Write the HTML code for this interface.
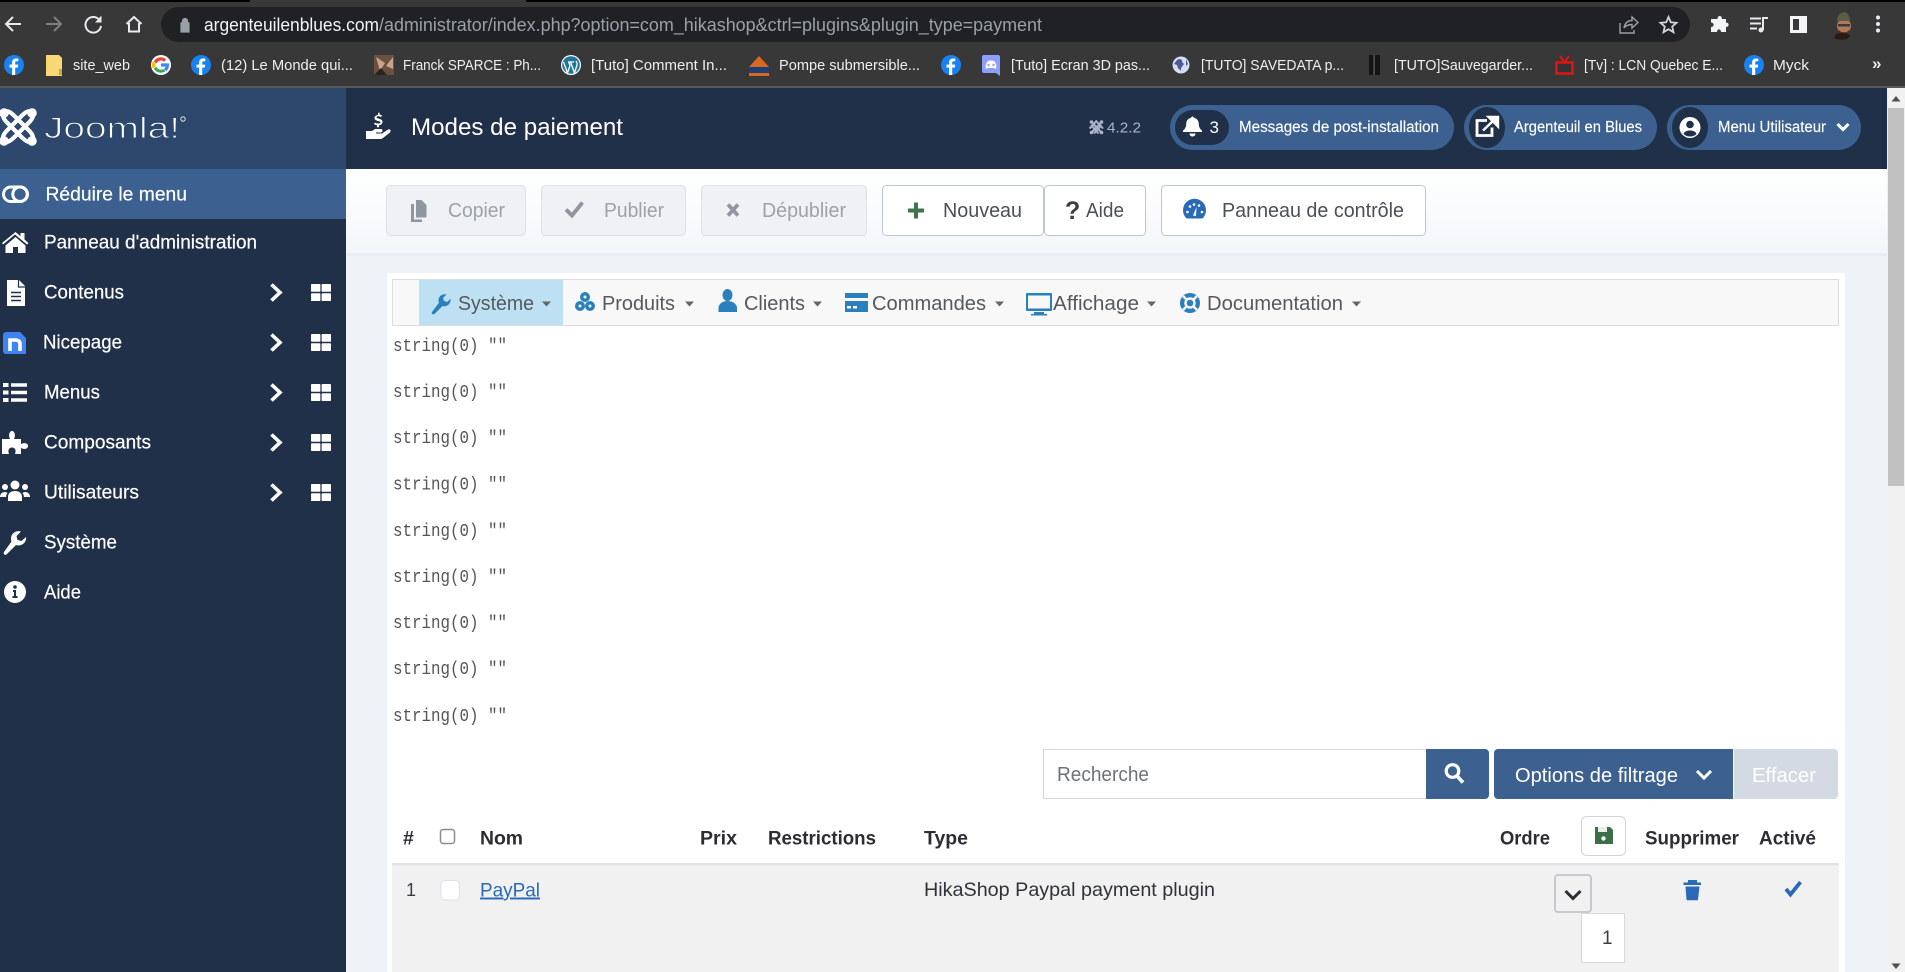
<!DOCTYPE html>
<html lang="fr">
<head>
<meta charset="utf-8">
<title>Modes de paiement</title>
<style>
html,body{margin:0;padding:0;width:1905px;height:972px;overflow:hidden;background:#eef3f7}
svg{display:block;position:absolute;left:0;top:0}
text{font-family:"Liberation Sans",sans-serif;white-space:pre}
.bm{font-size:15px;fill:#eceff1}
.sb{font-size:19.500px;fill:#fff;stroke:#fff;stroke-width:.2}
.nv{font-size:20.500px;fill:#55595e}
.th{font-size:19.500px;font-weight:bold;fill:#2b2d33}
.mono{font-family:"Liberation Mono",monospace;font-size:18.500px;fill:#555}
.dis{font-size:20.500px;fill:#9da2a9}
.en{font-size:20.500px;fill:#4a5058}
.pill{font-size:15.500px;fill:#fff;stroke:#fff;stroke-width:.15}
</style>
</head>
<body>
<svg width="1905" height="972" viewBox="0 0 1905 972" xmlns="http://www.w3.org/2000/svg">
<defs>
<linearGradient id="tb" x1="0" y1="0" x2="0" y2="1"><stop offset="0" stop-color="#ffffff"/><stop offset="1" stop-color="#f3f6fa"/></linearGradient>
<g id="fb"><circle cx="10" cy="10" r="10" fill="#1a82f0"/><path d="M11.2 20v-7.400h2.600l.4-3h-3V7.800c0-.9.3-1.500 1.500-1.500h1.600V3.600c-.4 0-1.200-.1-2.300-.1-2.300 0-3.900 1.400-3.900 4v2.100H5.500v3h2.600V20z" fill="#fff"/></g>
<g id="chev"><path d="M1.500 1.500 10 9.500 1.500 17.500" fill="none" stroke="#fff" stroke-width="3.600"/></g>
<g id="grid"><rect x="0" y="0" width="9.400" height="7.800" rx=".8" fill="#fff"/><rect x="10.600" y="0" width="9.400" height="7.800" rx=".8" fill="#fff"/><rect x="0" y="9.200" width="9.400" height="7.800" rx=".8" fill="#fff"/><rect x="10.600" y="9.200" width="9.400" height="7.800" rx=".8" fill="#fff"/></g>
<path id="caret" d="M0 0h9l-4.500 5z" fill="#666"/>
</defs>

<!-- Browser chrome -->
<rect x="0" y="0" width="1905" height="88" fill="#383838"/>
<rect x="0" y="0" width="250" height="2" fill="#000"/>
<rect x="526" y="0" width="1379" height="2" fill="#000"/>
<rect x="0" y="86" width="1905" height="2" fill="#585858"/>
<path d="M21 24H7M13 17l-7 7 7 7" fill="none" stroke="#e8eaed" stroke-width="2"/>
<path d="M46 24h14M54 17l7 7-7 7" fill="none" stroke="#7d7f82" stroke-width="2"/>
<path d="M99 19.500a7.800 7.800 0 1 0 2 6.500" fill="none" stroke="#e8eaed" stroke-width="2"/><path d="M101.500 15.500v7H95z" fill="#e8eaed"/>
<path d="M126.500 24 134 17l7.500 7M129 23v8.500h10V23" fill="none" stroke="#e8eaed" stroke-width="2"/>
<rect x="161" y="7" width="1529" height="35" rx="17.500" fill="#202124"/>
<path d="M181 23h8v9h-8zM182.500 23v-2a2.500 2.500 0 0 1 5 0v2" fill="#9aa0a6" stroke="#9aa0a6" stroke-width="1.200"/>
<text x="204" y="31" font-size="18" textLength="175" lengthAdjust="spacingAndGlyphs" fill="#f1f3f4">argenteuilenblues.com</text>
<text x="379" y="31" font-size="18" textLength="663" lengthAdjust="spacingAndGlyphs" fill="#9aa0a6">/administrator/index.php?option=com_hikashop&amp;ctrl=plugins&amp;plugin_type=payment</text>
<path d="M1620 23v10h14v-3M1624 28c1-5 4-7.500 8-7.500V17l6 5.500-6 5.500v-3.500c-3 0-6 .7-8 3.500z" fill="none" stroke="#9aa0a6" stroke-width="1.400"/>
<path d="m1668.500 17 2.300 5.300 5.700.5-4.300 3.800 1.300 5.600-5-3-5 3 1.300-5.600-4.300-3.800 5.700-.5z" fill="none" stroke="#d0d3d6" stroke-width="1.800"/>
<path d="M1714 19h3.500c0-4 4.500-4 4.500 0h4v3.500c3.500 0 3.500 4.500 0 4.500v5h-5c0-3.500-4-3.500-4 0H1711v-5c3.500 0 3.500-4.500 0-4.500v-3.500z" fill="#f1f3f4"/>
<path d="M1750 18.500h11M1750 23.500h11M1750 28.500h7" stroke="#e8eaed" stroke-width="2" fill="none"/><path d="M1763 30V18h5" stroke="#e8eaed" stroke-width="2" fill="none"/><circle cx="1761" cy="30" r="2.500" fill="#e8eaed"/>
<rect x="1791.500" y="17.500" width="14" height="14" fill="none" stroke="#f1f3f4" stroke-width="3"/><rect x="1799" y="17" width="7" height="15" fill="#f1f3f4"/>
<path d="M1834 38c1-4 4-5 8-5s7 1 8 3l-3 3c-4 1-10 1-13-1z" fill="#2a1a14"/><circle cx="1844" cy="26" r="7" fill="#b07a5a"/><path d="M1837 21c0-5 3-8 7-9 3 0 6 4 6 9z" fill="#5d5d47"/><rect x="1838" y="24" width="12" height="2.500" fill="#3a3a3a"/><path d="M1839 30c2 3 8 3 10 0v3h-10z" fill="#5a3322"/>
<circle cx="1878" cy="17.500" r="2" fill="#e8eaed"/><circle cx="1878" cy="24" r="2" fill="#e8eaed"/><circle cx="1878" cy="30.500" r="2" fill="#e8eaed"/>

<!-- Bookmarks -->
<use href="#fb" x="4" y="55"/>
<path d="M46 55h13l3 3v18H46z" fill="#f8d775"/><rect x="59" y="69" width="3" height="6" fill="#caa64a"/>
<text class="bm" x="73" y="70" textLength="57" lengthAdjust="spacingAndGlyphs">site_web</text>
<circle cx="161" cy="65" r="10" fill="#fff"/><path d="M161 60.500a4.500 4.500 0 0 1 3 1.200l2.300-2.300a8 8 0 0 0-12.500 2.100l2.700 2.100a4.800 4.800 0 0 1 4.500-3.100z" fill="#ea4335"/><path d="M155.500 63.500a5.500 5.500 0 0 0 0 3l-2.700 2.100a8 8 0 0 1 0-7.200z" fill="#fbbc05"/><path d="M153.800 68.600a8 8 0 0 0 11.800 2.500l-2.500-2a4.800 4.800 0 0 1-6.700-2.400z" fill="#34a853"/><path d="M169 65c0-.6 0-1.100-.2-1.600H161v3.200h4.500a3.900 3.900 0 0 1-1.700 2.500l2.500 2A8 8 0 0 0 169 65z" fill="#4285f4"/>
<use href="#fb" x="191" y="55"/>
<text class="bm" x="221" y="70" textLength="132" lengthAdjust="spacingAndGlyphs">(12) Le Monde qui...</text>
<rect x="374" y="55" width="20" height="20" fill="#6b5040"/><path d="M376 57l9 6-5 8zM386 66l7-9v12z" fill="#c9a58e"/><path d="M374 75l7-7 6 7z" fill="#2a2320"/>
<text class="bm" x="403" y="70" textLength="138" lengthAdjust="spacingAndGlyphs">Franck SPARCE : Ph...</text>
<circle cx="571" cy="65" r="10" fill="#fff"/><circle cx="571" cy="65" r="8.800" fill="#21759b"/><path d="M563.500 62l4 11 2.500-7.500-1.300-3.500M568 62h6M570.500 62l4 11 2.500-8c.5-2-.5-3-1-4" fill="none" stroke="#fff" stroke-width="1.300"/>
<text class="bm" x="591" y="70" textLength="136" lengthAdjust="spacingAndGlyphs">[Tuto] Comment In...</text>
<path d="M749 67l10-11 10 11z" fill="#d9691f"/><rect x="749" y="67" width="20" height="6" fill="#1f3f78"/><rect x="749" y="73" width="20" height="3" fill="#d9691f"/>
<text class="bm" x="779" y="70" textLength="141" lengthAdjust="spacingAndGlyphs">Pompe submersible...</text>
<use href="#fb" x="941" y="55"/>
<path d="M984 55h14a2 2 0 0 1 2 2v19l-4-3h-12a2 2 0 0 1-2-2V57a2 2 0 0 1 2-2z" fill="#8c9eff"/><path d="M986 69c-1-3 0-6 2-8 2-.6 4-.6 6 0 2 2 3 5 2 8l-2-1h-6z" fill="#fff"/><circle cx="988.500" cy="65" r="1.200" fill="#8c9eff"/><circle cx="993.500" cy="65" r="1.200" fill="#8c9eff"/>
<text class="bm" x="1011" y="70" textLength="139" lengthAdjust="spacingAndGlyphs">[Tuto] Ecran 3D pas...</text>
<circle cx="1181" cy="65" r="8.500" fill="#d8dcf0"/><path d="M1177 60c3-2 6 0 5 2l2 2-3 4v3l-3-3-1-3-3-1z" fill="#4c5a94"/><path d="M1186 59l2 5-2 2z" fill="#4c5a94"/>
<text class="bm" x="1201" y="70" textLength="143" lengthAdjust="spacingAndGlyphs">[TUTO] SAVEDATA p...</text>
<rect x="1369" y="55" width="11" height="20" fill="#151515"/><rect x="1373.500" y="55" width="1.200" height="20" fill="#666"/>
<text class="bm" x="1394" y="70" textLength="139" lengthAdjust="spacingAndGlyphs">[TUTO]Sauvegarder...</text>
<path d="M1560 56l4.500 6 4.500-6" fill="none" stroke="#e01515" stroke-width="2"/><rect x="1556.500" y="62.500" width="16" height="11" fill="#333" stroke="#e01515" stroke-width="2.500"/>
<text class="bm" x="1584" y="70" textLength="139" lengthAdjust="spacingAndGlyphs">[Tv] : LCN Quebec E...</text>
<use href="#fb" x="1744" y="55"/>
<text class="bm" x="1773" y="70" textLength="36" lengthAdjust="spacingAndGlyphs">Myck</text>
<text x="1872" y="69" font-size="17" font-weight="bold" fill="#e8eaed">»</text>

<!-- Page background -->
<rect x="0" y="88" width="1905" height="884" fill="#eef3f7"/>

<!-- Sidebar -->
<rect x="0" y="88" width="346" height="884" fill="#1f3048"/>
<rect x="0" y="88" width="346" height="81" fill="#2d486c"/>
<rect x="0" y="169" width="346" height="50" fill="#3c6190"/>
<!-- Logo -->
<g fill="none" stroke="#fff" stroke-width="4.200">
<path d="M13.500 115 29.500 131M6.500 122 22.500 138M22.500 115 6.500 131M29.500 122 13.500 138"/>
<path d="M13.500 115Q7 109 4 112.500Q1 116 6.500 122M22.500 115Q29 109 32 112.500Q35 116 29.500 122M6.500 131Q1 137 4 141Q7 144 13.500 138M29.500 131Q35 137 32 141Q29 144 22.500 138"/>
</g>
<g fill="#fff"><circle cx="4" cy="113" r="4.800"/><circle cx="32" cy="113" r="4.800"/><circle cx="4" cy="141" r="4.800"/><circle cx="32" cy="141" r="4.800"/></g>
<text x="44" y="138" font-size="30" textLength="136" lengthAdjust="spacingAndGlyphs" fill="#fff" stroke="#2d486c" stroke-width="1">Joomla!</text>
<circle cx="183" cy="119" r="2.200" fill="none" stroke="#fff" stroke-width=".8"/>
<!-- Sidebar icons -->
<g fill="none" stroke="#fff" stroke-width="3"><rect x="3.500" y="187" width="24" height="14.500" rx="7.250"/><circle cx="20" cy="194.200" r="7.200"/></g>
<path d="M2 243 15.500 232l5 4.200V233h4v6.500l4 3.500-1.500 1.500-12-10-12 10zM5.500 245.500l10-8.500 10 8.500v7.500h-7.500v-6h-5v6H5.500z" fill="#fff"/>
<path d="M7 280h12l6 6v20H7z" fill="#fff"/><path d="M18.500 279.500v7.500h7" fill="none" stroke="#1f3048" stroke-width="1.200"/><path d="M11 292.500h10M11 296.500h10M11 300.500h10" stroke="#1f3048" stroke-width="1.400"/>
<path d="M6 332h14l6 6v16H6a3 3 0 0 1-3-3V335a3 3 0 0 1 3-3z" fill="#3f84ee"/><path d="M10 351v-11h5c3.500 0 5 1.500 5 4v7" fill="none" stroke="#fff" stroke-width="3.600"/>
<path d="M11 385h16M11 392.500h16M11 400h16" stroke="#fff" stroke-width="3.400"/><rect x="3" y="383" width="5.500" height="4" fill="#fff"/><rect x="3" y="390.500" width="5.500" height="4" fill="#fff"/><rect x="3" y="398" width="5.500" height="4" fill="#fff"/>
<path d="M2 439H10C8 435 9.500 431 12 431C14.500 431 16 435 14 439H21V444C25 442 28 443.500 28 446C28 448.500 25 450 21 448V454H15C16.500 450 15 447.500 12 447.500C9 447.500 7.500 450 9 454H2Z" fill="#fff"/>
<g fill="#fff"><circle cx="15" cy="485" r="4.500"/><circle cx="5" cy="487" r="3"/><circle cx="25" cy="487" r="3"/><path d="M8 501v-4c0-4 3-6 7-6s7 2 7 6v4z"/><path d="M0 497c0-3 2-5 5-5 1 0 2 .5 2.500 1-1 1-1.500 3-1.500 4zM30 497c0-3-2-5-5-5-1 0-2 .5-2.500 1 1 1 1.500 3 1.500 4z"/></g>
<path d="M4 552c-1 1.500 .5 3.500 2.500 2.500L16 545c4 1.500 9-1 10-5.500.2-1 .2-2 0-2.500l-4.500 4-4-1-1-4 4.500-4.500c-5-1.500-10 2-10 7 0 1 0 2 .5 3z" fill="#fff"/>
<circle cx="15" cy="592" r="11" fill="#fff"/><path d="M13 590h3v6h1.500v2h-5v-2H14v-4h-1z" fill="#1f3048"/><circle cx="15" cy="587" r="1.800" fill="#1f3048"/>
<!-- Sidebar labels -->
<text class="sb" x="45.500" y="200.500" textLength="141.500" lengthAdjust="spacingAndGlyphs">Réduire le menu</text>
<text class="sb" x="44" y="248.500" textLength="213" lengthAdjust="spacingAndGlyphs">Panneau d'administration</text>
<text class="sb" x="44" y="298.500" textLength="80" lengthAdjust="spacingAndGlyphs">Contenus</text>
<text class="sb" x="43" y="348.500" textLength="79" lengthAdjust="spacingAndGlyphs">Nicepage</text>
<text class="sb" x="44" y="398.500" textLength="56" lengthAdjust="spacingAndGlyphs">Menus</text>
<text class="sb" x="44" y="448.500" textLength="107" lengthAdjust="spacingAndGlyphs">Composants</text>
<text class="sb" x="44" y="498.500" textLength="95" lengthAdjust="spacingAndGlyphs">Utilisateurs</text>
<text class="sb" x="44" y="548.500" textLength="73" lengthAdjust="spacingAndGlyphs">Système</text>
<text class="sb" x="44" y="598.500" textLength="37" lengthAdjust="spacingAndGlyphs">Aide</text>
<use href="#chev" x="270" y="283"/><use href="#chev" x="270" y="333"/><use href="#chev" x="270" y="383"/><use href="#chev" x="270" y="433"/><use href="#chev" x="270" y="483"/>
<use href="#grid" x="311" y="284"/><use href="#grid" x="311" y="334"/><use href="#grid" x="311" y="384"/><use href="#grid" x="311" y="434"/><use href="#grid" x="311" y="484"/>

<!-- Header -->
<rect x="346" y="88" width="1541" height="81" fill="#1f3048"/>
<g fill="#fff"><path d="M366 131h6l3-2h6c2 0 2 3 0 3.500h-5v1h6l6-4c2-1 3.500 1 2 3l-7 5.500c-1 .7-2 1-3 1h-14z"/><path d="M378 113v2c-2 .2-3.500 1.500-3.500 3 0 3.500 6 2.500 6 4.500 0 .8-1 1-2.500 1s-2.500-.4-3-1l-1 1.500c.8.8 2 1.200 3 1.300v2h2v-2c2-.3 3.500-1.500 3.500-3.500 0-3.500-6-2.700-6-4.500 0-.7 1-1 2-1s2 .3 2.500 .8l1-1.500c-.7-.6-1.600-1-2.500-1.200v-2z"/></g>
<text x="411" y="135" font-size="24" textLength="212" lengthAdjust="spacingAndGlyphs" fill="#fff">Modes de paiement</text>
<g stroke="#a9b5c8" stroke-width="2" fill="none"><path d="M1092 122.500l9 9.500M1095.500 120.500l7.500 8M1101 122.500l-9 9.500M1097 120.500l-7.500 8M1091 125l7.500 8.500M1101.500 125l-7.500 8.500"/></g>
<g fill="#a9b5c8"><circle cx="1091.500" cy="122" r="1.800"/><circle cx="1101.500" cy="122" r="1.800"/><circle cx="1091.500" cy="132.500" r="1.800"/><circle cx="1101.500" cy="132.500" r="1.800"/></g>
<text x="1107" y="132.500" font-size="15" textLength="34" lengthAdjust="spacingAndGlyphs" fill="#a9b5c8">4.2.2</text>
<!-- Pills -->
<rect x="1170" y="105" width="284" height="45" rx="22.500" fill="#3c6190"/>
<rect x="1175" y="110" width="54" height="35" rx="17.500" fill="#1f3048"/>
<path d="M1192.500 116.500c.8 0 1.300.5 1.300 1.200 3.500.6 5 3.400 5 6.500 0 4 2.500 5.500 3.200 6.500v1.300h-19v-1.300c.7-1 3.200-2.500 3.200-6.500 0-3.100 1.500-5.900 5-6.500 0-.7.5-1.200 1.300-1.200zM1189.500 133.500h6c0 1.700-1.300 3-3 3s-3-1.300-3-3z" fill="#fff"/>
<text x="1209.500" y="133" font-size="17" fill="#fff">3</text>
<text class="pill" x="1239" y="132" textLength="200" lengthAdjust="spacingAndGlyphs">Messages de post-installation</text>
<rect x="1464" y="105" width="193" height="45" rx="22.500" fill="#3c6190"/>
<ellipse cx="1487" cy="127.500" rx="18" ry="20.500" fill="#1f3048"/>
<path d="M1487 120.500h-10v15h15v-8" fill="none" stroke="#fff" stroke-width="2.800"/><path d="M1483 130.500 1494 120M1488.500 117h9.500v9.500z" stroke="#fff" stroke-width="2.400" fill="#fff"/>
<text class="pill" x="1514" y="132" textLength="128" lengthAdjust="spacingAndGlyphs">Argenteuil en Blues</text>
<rect x="1667" y="105" width="194" height="45" rx="22.500" fill="#3c6190"/>
<ellipse cx="1690" cy="127.500" rx="18" ry="20.500" fill="#1f3048"/>
<circle cx="1690" cy="127.500" r="10.500" fill="#fff"/><circle cx="1690" cy="124.500" r="3.800" fill="#1f3048"/><path d="M1683.500 134c1-2.500 3-3.500 6.500-3.500s5.500 1 6.500 3.500c-1.500 1.600-4 2.500-6.500 2.500s-5-1-6.500-2.500z" fill="#1f3048"/>
<text class="pill" x="1718" y="132" textLength="108" lengthAdjust="spacingAndGlyphs">Menu Utilisateur</text>
<path d="M1837.500 124l5.500 5.500 5.500-5.500" fill="none" stroke="#fff" stroke-width="3"/>

<!-- Toolbar -->
<rect x="346" y="169" width="1541" height="84" fill="url(#tb)"/>
<rect x="346" y="253" width="1541" height="3" fill="#e8edf2"/>
<g stroke="#dde1e7" fill="#eff1f4">
<rect x="386.500" y="185.500" width="139" height="50" rx="4"/>
<rect x="541.500" y="185.500" width="144" height="50" rx="4"/>
<rect x="701.500" y="185.500" width="165" height="50" rx="4"/>
</g>
<g stroke="#bcc6d3" fill="#fff">
<rect x="882.500" y="185.500" width="161" height="50" rx="4"/>
<rect x="1044.500" y="185.500" width="101" height="50" rx="4"/>
<rect x="1161.500" y="185.500" width="264" height="50" rx="4"/>
</g>
<path d="M416 200h5.500l5 5v12.500H416zM411 204h3v15.500h8v2.500h-11z" fill="#9096a0"/>
<path d="M566 209.500l6 6 10.500-13" fill="none" stroke="#9096a0" stroke-width="3.800"/>
<path d="M728 204.500l10 11M738 204.500l-10 11" fill="none" stroke="#9096a0" stroke-width="3.800"/>
<path d="M916 202.500v16M908 210.500h16" stroke="#40744a" stroke-width="4"/>
<text class="dis" x="448" y="217" textLength="57" lengthAdjust="spacingAndGlyphs">Copier</text>
<text class="dis" x="604" y="217" textLength="60" lengthAdjust="spacingAndGlyphs">Publier</text>
<text class="dis" x="762" y="217" textLength="84" lengthAdjust="spacingAndGlyphs">Dépublier</text>
<text class="en" x="943" y="217" textLength="79" lengthAdjust="spacingAndGlyphs">Nouveau</text>
<text x="1065" y="219" font-size="25" font-weight="bold" fill="#3a3f46">?</text>
<text class="en" x="1086" y="217" textLength="38" lengthAdjust="spacingAndGlyphs">Aide</text>
<text class="en" x="1222" y="217" textLength="182" lengthAdjust="spacingAndGlyphs">Panneau de contrôle</text>
<path d="M1186.500 218.500a11.500 11.500 0 1 1 16 0z" fill="#2a69b8"/>
<path d="M1196.500 207l-3.500 8.500 3 .8z" fill="#fff"/><g fill="#fff"><circle cx="1187.500" cy="212" r="1.300"/><circle cx="1190" cy="206.500" r="1.300"/><circle cx="1194" cy="204.500" r="1.300"/><circle cx="1199" cy="205.500" r="1.300"/><circle cx="1202" cy="212" r="1.300"/></g>

<!-- Card -->
<rect x="387" y="273" width="1458" height="699" fill="#fff"/>
<!-- Nav -->
<rect x="392.500" y="279.500" width="1446" height="46" fill="#f8f8f8" stroke="#dcdcdc" stroke-width="1"/>
<rect x="419" y="280" width="144" height="45" fill="#bde0f3"/>
<g fill="#2a7fbd">
<path d="M432 312c-1 1.500 1 3 2.500 2l8-8c3.500 1 7-1 8-5 .2-.7.2-1.400 0-2l-3.500 3-3-1-1-3 3.500-3.500c-4-1-8 1.500-8 6 0 .8 0 1.500 .5 2.200z"/>
<circle cx="585" cy="297" r="5"/><circle cx="580" cy="306" r="5"/><circle cx="590" cy="306" r="5"/>
<ellipse cx="727.500" cy="295" rx="5" ry="6"/><path d="M718.500 312v-4c0-4 4-7 9-7s9.500 3 9.500 7v4z"/>
<rect x="845" y="293" width="23" height="5"/><path d="M845 301h23v11h-23z"/>
<path d="M1027 293h24a1 1 0 0 1 1 1v16a1 1 0 0 1-1 1h-24a1 1 0 0 1-1-1v-16a1 1 0 0 1 1-1zm1 2.500v13h22v-13zM1034 312h10v2h3v1.500h-16V314h3z"/>
<circle cx="1190" cy="303" r="10"/>
</g>
<g fill="#f8f8f8"><rect x="847" y="306" width="4" height="2.500"/><rect x="853" y="306" width="4" height="2.500"/></g>
<g fill="#f8f8f8"><circle cx="585" cy="297" r="1.500"/><circle cx="580" cy="306" r="1.500"/><circle cx="590" cy="306" r="1.500"/></g>
<circle cx="1190" cy="303" r="4.500" fill="#2a7fbd" stroke="#f8f8f8" stroke-width="2.400"/><path d="M1183 296l3.500 3.500M1197 296l-3.500 3.500M1183 310l3.500-3.500M1197 310l-3.500-3.500" stroke="#f8f8f8" stroke-width="2.600"/>
<text class="nv" x="458" y="310" textLength="76" lengthAdjust="spacingAndGlyphs">Système</text>
<text class="nv" x="602" y="310" textLength="73" lengthAdjust="spacingAndGlyphs">Produits</text>
<text class="nv" x="744" y="310" textLength="61" lengthAdjust="spacingAndGlyphs">Clients</text>
<text class="nv" x="872" y="310" textLength="114" lengthAdjust="spacingAndGlyphs">Commandes</text>
<text class="nv" x="1053" y="310" textLength="86" lengthAdjust="spacingAndGlyphs">Affichage</text>
<text class="nv" x="1207" y="310" textLength="136" lengthAdjust="spacingAndGlyphs">Documentation</text>
<use href="#caret" x="542" y="301.500"/><use href="#caret" x="685" y="301.500"/><use href="#caret" x="813" y="301.500"/><use href="#caret" x="995" y="301.500"/><use href="#caret" x="1147" y="301.500"/><use href="#caret" x="1352" y="301.500"/>
<!-- debug strings -->
<text class="mono" x="393" y="351" textLength="114" lengthAdjust="spacingAndGlyphs">string(0) ""</text>
<text class="mono" x="393" y="397" textLength="114" lengthAdjust="spacingAndGlyphs">string(0) ""</text>
<text class="mono" x="393" y="443" textLength="114" lengthAdjust="spacingAndGlyphs">string(0) ""</text>
<text class="mono" x="393" y="489.500" textLength="114" lengthAdjust="spacingAndGlyphs">string(0) ""</text>
<text class="mono" x="393" y="536" textLength="114" lengthAdjust="spacingAndGlyphs">string(0) ""</text>
<text class="mono" x="393" y="582" textLength="114" lengthAdjust="spacingAndGlyphs">string(0) ""</text>
<text class="mono" x="393" y="628" textLength="114" lengthAdjust="spacingAndGlyphs">string(0) ""</text>
<text class="mono" x="393" y="674" textLength="114" lengthAdjust="spacingAndGlyphs">string(0) ""</text>
<text class="mono" x="393" y="721" textLength="114" lengthAdjust="spacingAndGlyphs">string(0) ""</text>
<!-- Search -->
<rect x="1043.500" y="749.500" width="384" height="49" fill="#fff" stroke="#d3d9e0"/>
<text x="1057" y="781" font-size="20" textLength="92" lengthAdjust="spacingAndGlyphs" fill="#6d7279">Recherche</text>
<path d="M1426 749h59a4 4 0 0 1 4 4v42a4 4 0 0 1-4 4h-59z" fill="#3c6190"/>
<circle cx="1452.500" cy="771" r="6.300" fill="none" stroke="#fff" stroke-width="3.200"/><path d="M1457 776l6 6.500" stroke="#fff" stroke-width="3.600"/>
<path d="M1498 749h235v50h-235a4 4 0 0 1-4-4v-42a4 4 0 0 1 4-4z" fill="#3c6190"/>
<text x="1515" y="782" font-size="20.500" textLength="163" lengthAdjust="spacingAndGlyphs" fill="#fff">Options de filtrage</text>
<path d="M1697 771l7 7 7-7" fill="none" stroke="#fff" stroke-width="3"/>
<path d="M1734 749h100a4 4 0 0 1 4 4v42a4 4 0 0 1-4 4h-100z" fill="#d3dae3"/>
<text x="1752" y="782" font-size="20.500" textLength="64" lengthAdjust="spacingAndGlyphs" fill="#fff">Effacer</text>
<!-- Table head -->
<text class="th" x="403" y="844.500">#</text>
<rect x="440.500" y="829.500" width="14" height="14" rx="2.500" fill="#fff" stroke="#8a8d91" stroke-width="1.500"/>
<text class="th" x="480" y="844.500" textLength="43" lengthAdjust="spacingAndGlyphs">Nom</text>
<text class="th" x="700" y="844.500" textLength="37" lengthAdjust="spacingAndGlyphs">Prix</text>
<text class="th" x="768" y="844.500" textLength="108" lengthAdjust="spacingAndGlyphs">Restrictions</text>
<text class="th" x="924" y="844.500" textLength="44" lengthAdjust="spacingAndGlyphs">Type</text>
<text class="th" x="1500" y="844.500" textLength="50" lengthAdjust="spacingAndGlyphs">Ordre</text>
<rect x="1581.500" y="816.500" width="44" height="39" rx="5" fill="#fff" stroke="#cfd5dd"/>
<path d="M1595 827h15l3 3v14h-18z" fill="#3a6f47"/><rect x="1598" y="827" width="9" height="5" fill="#e8eee9"/><circle cx="1603.500" cy="838.500" r="2.200" fill="#fff"/>
<text class="th" x="1645" y="844.500" textLength="94" lengthAdjust="spacingAndGlyphs">Supprimer</text>
<text class="th" x="1759" y="844.500" textLength="57" lengthAdjust="spacingAndGlyphs">Activé</text>
<!-- Row -->
<rect x="392" y="863" width="1447" height="109" fill="#f1f1f2"/>
<rect x="392" y="863" width="1447" height="2.500" fill="#dfe2e6"/>
<text x="406" y="896" font-size="18" fill="#3a3d42">1</text>
<rect x="441" y="880.500" width="18.500" height="19.500" rx="4" fill="#fff" stroke="#dde0e4"/>
<text x="480" y="896.500" font-size="19.500" textLength="60" lengthAdjust="spacingAndGlyphs" fill="#2a69b8" text-decoration="underline">PayPal</text>
<text x="924" y="896" font-size="19.500" textLength="291" lengthAdjust="spacingAndGlyphs" fill="#2f3238">HikaShop Paypal payment plugin</text>
<rect x="1555" y="875" width="36" height="37" rx="3" fill="#f1f1f2" stroke="#c8c9cc" stroke-width="2"/>
<path d="M1565.500 891l7.500 7.500 7.500-7.500" fill="none" stroke="#2b2d33" stroke-width="3"/>
<rect x="1581.500" y="913.500" width="43" height="49" fill="#fff" stroke="#d3d9e0"/>
<text x="1602" y="944" font-size="19" fill="#3a3d42">1</text>
<path d="M1683.500 882.500h17.500v2.500h-17.500zM1688 880h9v2.500h-9zM1685.500 886.500h14l-1.500 13c0 .5-.5 .8-1 .8h-9.500c-.5 0-1-.3-1-.8z" fill="#2a69b8"/>
<path d="M1786 889l4.500 5.500 10-12.500" fill="none" stroke="#2a69b8" stroke-width="3.800"/>

<!-- Scrollbar -->
<rect x="1887" y="88" width="18" height="884" fill="#f1f1f1"/>
<rect x="1888" y="108" width="16" height="378" fill="#c1c1c1"/>
<path d="M1891.500 101.500 1896 96l4.500 5.500z" fill="#505050"/>
<path d="M1891.500 963.500 1896 969l4.500-5.500z" fill="#505050"/>
</svg>
</body>
</html>
